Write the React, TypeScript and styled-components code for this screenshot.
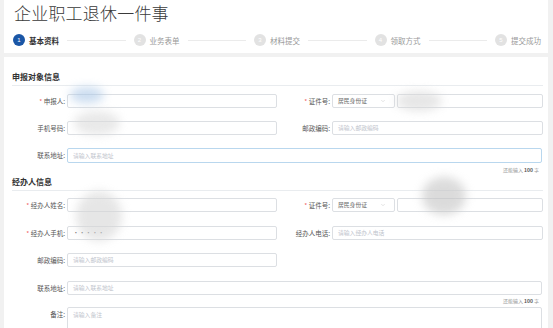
import styled, { createGlobalStyle } from "styled-components";
import { ChevronDown } from "lucide-react";

const steps = ["基本资料", "业务表单", "材料提交", "领取方式", "提交成功"];

const App = () => {
  return (
    <Page>
      <GlobalStyle />
      <Head>
        <Title>企业职工退休一件事</Title>
        <Steps>
          {steps.map((s, i) => (
            <StepGroup key={s} $last={i === steps.length - 1}>
              <Step>
                <Dot $active={i === 0}>{i + 1}</Dot>
                <StepLabel $active={i === 0}>{s}</StepLabel>
              </Step>
              {i < steps.length - 1 && <Line />}
            </StepGroup>
          ))}
        </Steps>
      </Head>

      <Body>
        <SectionTitle>申报对象信息</SectionTitle>
        <Row $top={8}>
          <Label $required>申报人:</Label>
          <Input />
          <Label $required>证件号:</Label>
          <IdField>
            <Select>
              <span>居民身份证</span>
              <ChevronDown size={6} color="#c8c8c8" />
            </Select>
            <Input />
          </IdField>
        </Row>
        <Row $top={13}>
          <Label>手机号码:</Label>
          <Input />
          <Label>邮政编码:</Label>
          <Input>请输入邮政编码</Input>
        </Row>
        <Row $top={13}>
          <Label>联系地址:</Label>
          <Area $focused $h={15}>请输入联系地址</Area>
        </Row>
        <Counter $top={2}>
          还能输入 <b>100</b> 字
        </Counter>

        <SectionTitle $top={2}>经办人信息</SectionTitle>
        <Row $top={7}>
          <Label $required>经办人姓名:</Label>
          <Input />
          <Label $required>证件号:</Label>
          <IdField>
            <Select>
              <span>居民身份证</span>
              <ChevronDown size={6} color="#c8c8c8" />
            </Select>
            <Input />
          </IdField>
        </Row>
        <Row $top={14}>
          <Label $required>经办人手机:</Label>
          <Input>
            <Masked>·····</Masked>
          </Input>
          <Label>经办人电话:</Label>
          <Input>请输入经办人电话</Input>
        </Row>
        <Row $top={13}>
          <Label>邮政编码:</Label>
          <Input>请输入邮政编码</Input>
        </Row>
        <Row $top={14}>
          <Label>联系地址:</Label>
          <Area $h={14}>请输入联系地址</Area>
        </Row>
        <Counter $top={1}>
          还能输入 <b>100</b> 字
        </Counter>
        <Row $top={2}>
          <Label>备注:</Label>
          <Area $h={30}>请输入备注</Area>
        </Row>

        <Smear $x={66} $y={30} $w={34} $h={16} $c="#a9c6e6" />
        <Smear $x={70} $y={54} $w={46} $h={24} $c="#dadada" />
        <Smear $x={392} $y={34} $w={46} $h={20} $c="#d6d6d6" />
        <Smear $x={72} $y={134} $w={46} $h={50} $c="#d6d6d6" />
        <Smear $x={418} $y={120} $w={44} $h={38} $c="#c4c4c4" />
      </Body>
    </Page>
  );
};

export default App;

const GlobalStyle = createGlobalStyle`
  body {
    margin: 0;
    background: #f1f1f1;
    font-family: "Noto Sans CJK SC", "Noto Sans", sans-serif;
    overflow: hidden;
  }
`;

const Page = styled.div`
  width: 544px;
  padding-left: 4px;
`;

const Head = styled.div`
  background: #fff;
  padding: 2px 7px 7px 9px;
`;

const Title = styled.div`
  font-size: 17px;
  line-height: 22px;
  color: #3a3a3a;
  font-weight: 300;
  padding-left: 1px;
  letter-spacing: 0.2px;
`;

const Steps = styled.div`
  display: flex;
  align-items: center;
  margin-top: 10px;
  height: 12px;
`;

const StepGroup = styled.div<{ $last?: boolean }>`
  display: flex;
  align-items: center;
  flex: ${(p) => (p.$last ? "0 0 auto" : "1")};
`;

const Step = styled.div`
  display: flex;
  align-items: center;
  gap: 4px;
`;

const Dot = styled.div<{ $active?: boolean }>`
  width: 12px;
  height: 12px;
  border-radius: 50%;
  background: ${(p) => (p.$active ? "#1a56a6" : "#e2e2e2")};
  color: #fff;
  font-size: 6px;
  display: flex;
  align-items: center;
  justify-content: center;
  font-family: "Liberation Sans", sans-serif;
`;

const StepLabel = styled.span<{ $active?: boolean }>`
  font-size: 7.5px;
  color: ${(p) => (p.$active ? "#333" : "#999")};
  font-weight: ${(p) => (p.$active ? 700 : 400)};
  white-space: nowrap;
`;

const Line = styled.div`
  flex: 1;
  height: 1px;
  background: #ebebeb;
  margin: 0 8px;
`;

const Body = styled.div`
  position: relative;
  background: #fff;
  margin-top: 4px;
  padding: 14px 5px 40px 4px;
`;

const SectionTitle = styled.div<{ $top?: number }>`
  margin-top: ${(p) => p.$top ?? 0}px;
  margin-left: 4px;
  font-size: 8px;
  line-height: 12px;
  font-weight: 700;
  color: #333;
  padding-bottom: 2px;
  border-bottom: 1px solid #e9ecef;
`;

const Row = styled.div<{ $top?: number }>`
  display: grid;
  grid-template-columns: 57px 210px 51px 211px;
  column-gap: 2px;
  align-items: start;
  margin-top: ${(p) => p.$top ?? 0}px;
`;

const Label = styled.div<{ $required?: boolean }>`
  font-size: 6.5px;
  line-height: 14px;
  color: #555;
  text-align: right;
  white-space: nowrap;

  &::before {
    content: ${(p) => (p.$required ? '"* "' : '""')};
    color: #f0605f;
  }
`;

const Input = styled.div`
  height: 14px;
  box-sizing: border-box;
  border: 1px solid #dcdfe3;
  border-radius: 2px;
  padding: 0 5px;
  font-size: 5.8px;
  line-height: 12px;
  color: #c0c4cc;
  white-space: nowrap;
  overflow: hidden;
`;

const Masked = styled.span`
  color: #666;
  letter-spacing: 0.5px;
`;

const IdField = styled.div`
  display: grid;
  grid-template-columns: 63px 1fr;
  column-gap: 2px;
`;

const Select = styled(Input)`
  display: flex;
  align-items: center;
  justify-content: space-between;
  color: #666;
  padding-right: 8px;
`;

const Area = styled(Input)<{ $h: number; $focused?: boolean }>`
  grid-column: 2 / 5;
  height: ${(p) => p.$h}px;
  margin-right: 1px;
  line-height: ${(p) => (p.$h > 20 ? "14px" : `${p.$h - 2}px`)};
  border-color: ${(p) => (p.$focused ? "#b9d7ee" : "#dcdfe3")};
`;

const Counter = styled.div<{ $top?: number }>`
  margin-top: ${(p) => p.$top ?? 0}px;
  text-align: right;
  padding-right: 4px;
  font-size: 5px;
  line-height: 9px;
  color: #999;

  b {
    color: #555;
  }
`;

const Smear = styled.div<{ $x: number; $y: number; $w: number; $h: number; $c: string }>`
  position: absolute;
  left: ${(p) => p.$x}px;
  top: ${(p) => p.$y}px;
  width: ${(p) => p.$w}px;
  height: ${(p) => p.$h}px;
  background: ${(p) => p.$c};
  border-radius: 50%;
  filter: blur(5px);
  opacity: 0.6;
  pointer-events: none;
`;
